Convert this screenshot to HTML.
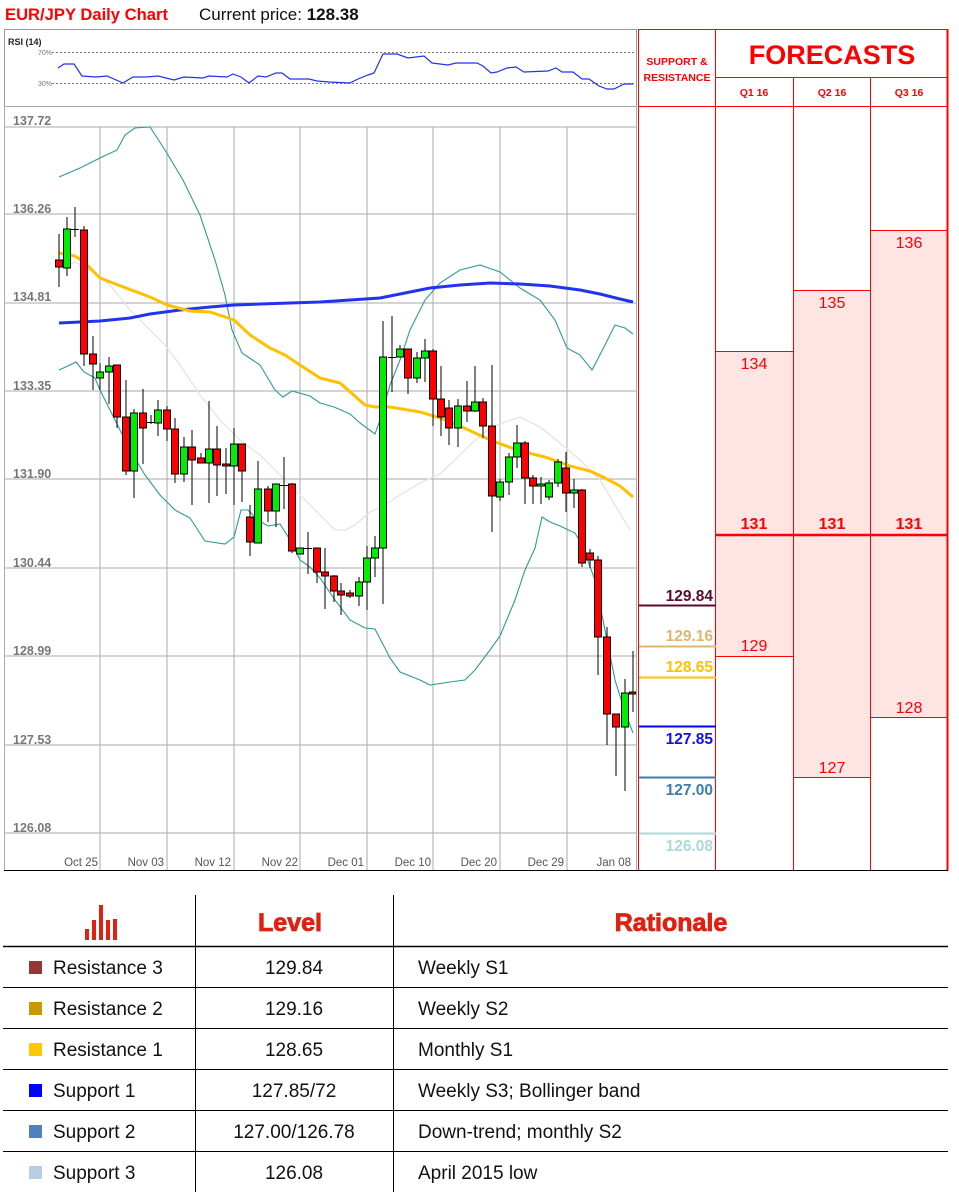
<!DOCTYPE html>
<html><head><meta charset="utf-8"><style>
html,body{margin:0;padding:0;background:#fff;}
svg{display:block;}
text{font-family:"Liberation Sans",sans-serif;}
</style></head><body>
<svg width="959" height="1192" viewBox="0 0 959 1192" xmlns="http://www.w3.org/2000/svg">
<rect width="959" height="1192" fill="#fff"/>
<!-- header -->
<text x="5" y="20" font-size="17" font-weight="bold" fill="#ff0000" textLength="163" lengthAdjust="spacingAndGlyphs">EUR/JPY Daily Chart</text>
<text x="199" y="20" font-size="17" fill="#111">Current price: <tspan font-weight="bold">128.38</tspan></text>

<!-- RSI box -->
<rect x="4.5" y="29.5" width="632" height="77" fill="#fff" stroke="#999"/>
<text x="8" y="45" font-size="9" font-weight="bold" fill="#222">RSI (14)</text>
<line x1="52" y1="52.5" x2="634" y2="52.5" stroke="#777" stroke-dasharray="2,2"/>
<line x1="52" y1="83.5" x2="634" y2="83.5" stroke="#777" stroke-dasharray="2,2"/>
<text x="38" y="55" font-size="7" fill="#777">70%</text>
<text x="38" y="86" font-size="7" fill="#777">30%</text>
<polyline fill="none" stroke="#2233ee" stroke-width="1.2" points="58,68 64,64 74,64 82,76 96,77 107,76 123,83 133,77 146,77 158,76 174,80 184,77 203,78 209,76 227,77 233,74 241,77 249,83 258,76 266,77 276,73 282,73 290,79 309,79 317,81 329,82 350,83 358,79 368,75 374,73 383,54 397,54 408,58 424,56 432,63 448,65 456,63 477,63 483,66 491,73 497,72 507,68 516,67 524,72 548,71 556,68 562,72 573,72 582,79 589,79 599,86 607,89 614,89 624,84 633,84"/>

<!-- main chart frame -->
<rect x="4.5" y="106.5" width="632" height="764" fill="#fff" stroke="#aaa"/>
<g stroke="#aaa" stroke-width="1">
<line x1="5" y1="127" x2="636" y2="127"/>
<line x1="5" y1="214" x2="636" y2="214"/>
<line x1="5" y1="303" x2="636" y2="303"/>
<line x1="5" y1="391" x2="636" y2="391"/>
<line x1="5" y1="479" x2="636" y2="479"/>
<line x1="5" y1="568" x2="636" y2="568"/>
<line x1="5" y1="656" x2="636" y2="656"/>
<line x1="5" y1="745" x2="636" y2="745"/>
<line x1="5" y1="833" x2="636" y2="833"/>
<line x1="100" y1="127" x2="100" y2="870"/>
<line x1="167" y1="127" x2="167" y2="870"/>
<line x1="234" y1="127" x2="234" y2="870"/>
<line x1="300" y1="127" x2="300" y2="870"/>
<line x1="367" y1="127" x2="367" y2="870"/>
<line x1="433" y1="127" x2="433" y2="870"/>
<line x1="500" y1="127" x2="500" y2="870"/>
<line x1="567" y1="127" x2="567" y2="870"/>
</g>
<line x1="4" y1="870.5" x2="640" y2="870.5" stroke="#000" stroke-width="1"/>
<g font-size="12.5" font-weight="bold" fill="#777">
<text x="13" y="125">137.72</text>
<text x="13" y="213">136.26</text>
<text x="13" y="301">134.81</text>
<text x="13" y="390">133.35</text>
<text x="13" y="478">131.90</text>
<text x="13" y="567">130.44</text>
<text x="13" y="655">128.99</text>
<text x="13" y="744">127.53</text>
<text x="13" y="832">126.08</text>
</g>
<g font-size="11.5" fill="#555" text-anchor="end">
<text x="98" y="866">Oct 25</text>
<text x="164" y="866">Nov 03</text>
<text x="231" y="866">Nov 12</text>
<text x="298" y="866">Nov 22</text>
<text x="364" y="866">Dec 01</text>
<text x="431" y="866">Dec 10</text>
<text x="497" y="866">Dec 20</text>
<text x="564" y="866">Dec 29</text>
<text x="631" y="866">Jan 08</text>
</g>

<!-- bands -->
<polyline fill="none" stroke="#e2e2e2" stroke-width="1.2" points="59,268 75,262 90,270 110,285 130,310 150,330 165,345 180,365 200,395 220,420 240,440 260,455 280,475 300,495 320,515 335,530 345,530 355,525 370,512 385,505 400,495 420,483 440,474 455,460 470,445 490,428 505,422 520,417 540,427 560,443 580,460 600,480 615,505 630,530"/>
<polyline fill="none" stroke="#2e9a94" stroke-width="1.1" points="59,177 80,168 100,158 117,150 125,135 135,128 150,127 165,150 183,180 200,215 215,260 225,295 232,330 242,353 260,365 275,390 283,397 292,391 310,396 320,403 334,407 350,414 360,423 375,434 380,420 390,385 400,360 410,330 425,300 440,283 460,270 480,265 500,272 520,288 540,300 555,320 567,348 580,355 592,370 605,345 615,325 625,328 633,334"/>
<polyline fill="none" stroke="#2e9a94" stroke-width="1.1" points="59,370 70,365 76,362 84,372 95,378 100,390 110,410 120,430 130,450 145,475 160,495 175,510 190,518 205,541 225,544 234,537 241,510 248,510 258,520 268,526 280,524 292,543 300,560 310,567 320,578 335,600 350,620 365,628 375,629 390,658 400,672 420,680 430,685 450,682 465,680 475,670 490,650 500,636 515,600 525,570 535,548 542,517 550,522 560,526 575,533 582,545 595,580 605,630 615,680 625,712 633,733"/>
<polyline fill="none" stroke="#2233ee" stroke-width="3" points="59,323 80,322 100,321 130,318 150,314 180,310 210,307 234,305 260,304 290,303 320,302 350,300 380,298 400,294 430,288 460,285 490,283 520,284 550,286 580,290 600,294 620,299 633,302"/>
<polyline fill="none" stroke="#ffc000" stroke-width="3" points="59,253 75,256 84,262 100,278 126,288 150,297 167,305 190,311 210,312 234,320 250,335 270,348 285,355 300,365 320,378 340,383 365,405 375,407 390,407 420,412 440,418 460,426 490,440 520,451 545,457 570,466 590,471 605,478 620,486 633,497"/>

<!-- candles -->
<g stroke="#000" stroke-width="1">
<line x1="59" y1="234" x2="59" y2="287"/><rect x="55.5" y="260" width="7" height="7" fill="#ff0000"/>
<line x1="67" y1="217" x2="67" y2="276"/><rect x="63.5" y="229" width="7" height="39" fill="#00ee00"/>
<line x1="75" y1="207" x2="75" y2="237"/><line x1="71" y1="229.5" x2="79" y2="229.5"/>
<line x1="84" y1="226" x2="84" y2="366"/><rect x="80.5" y="230" width="7" height="124" fill="#ff0000"/>
<line x1="93" y1="336" x2="93" y2="390"/><rect x="89.5" y="354" width="7" height="10" fill="#ff0000"/>
<line x1="100" y1="363" x2="100" y2="390"/><rect x="96.5" y="372" width="7" height="6" fill="#00ee00"/>
<line x1="109" y1="357" x2="109" y2="404"/><rect x="105.5" y="366" width="7" height="6" fill="#00ee00"/>
<line x1="117" y1="365" x2="117" y2="428"/><rect x="113.5" y="365" width="7" height="52" fill="#ff0000"/>
<line x1="126" y1="380" x2="126" y2="475"/><rect x="122.5" y="417" width="7" height="54" fill="#ff0000"/>
<line x1="134" y1="409" x2="134" y2="498"/><rect x="130.5" y="413" width="7" height="58" fill="#00ee00"/>
<line x1="143" y1="389" x2="143" y2="464"/><rect x="139.5" y="413" width="7" height="15" fill="#ff0000"/>
<line x1="151" y1="415" x2="151" y2="424"/><line x1="147" y1="422.5" x2="155" y2="422.5"/>
<line x1="158" y1="400" x2="158" y2="436"/><rect x="154.5" y="410" width="7" height="13" fill="#00ee00"/>
<line x1="167" y1="406" x2="167" y2="441"/><rect x="163.5" y="410" width="7" height="19" fill="#ff0000"/>
<line x1="175" y1="418" x2="175" y2="483"/><rect x="171.5" y="429" width="7" height="45" fill="#ff0000"/>
<line x1="184" y1="437" x2="184" y2="482"/><rect x="180.5" y="447" width="7" height="27" fill="#00ee00"/>
<line x1="192" y1="430" x2="192" y2="505"/><rect x="188.5" y="447" width="7" height="13" fill="#ff0000"/>
<line x1="201" y1="453" x2="201" y2="463"/><rect x="197.5" y="458" width="7" height="5" fill="#ff0000"/>
<line x1="209" y1="401" x2="209" y2="503"/><rect x="205.5" y="449" width="7" height="14" fill="#00ee00"/>
<line x1="217" y1="426" x2="217" y2="496"/><rect x="213.5" y="449" width="7" height="16" fill="#ff0000"/>
<line x1="226" y1="448" x2="226" y2="494"/><rect x="222.5" y="464" width="7" height="2" fill="#ff0000"/>
<line x1="234" y1="428" x2="234" y2="505"/><rect x="230.5" y="444" width="7" height="22" fill="#00ee00"/>
<line x1="242" y1="444" x2="242" y2="502"/><rect x="238.5" y="444" width="7" height="27" fill="#ff0000"/>
<line x1="250" y1="505" x2="250" y2="556"/><rect x="246.5" y="517" width="7" height="25" fill="#ff0000"/>
<line x1="258" y1="461" x2="258" y2="543"/><rect x="254.5" y="489" width="7" height="54" fill="#00ee00"/>
<line x1="268" y1="486" x2="268" y2="522"/><rect x="264.5" y="489" width="7" height="22" fill="#ff0000"/>
<line x1="276" y1="484" x2="276" y2="527"/><rect x="272.5" y="484" width="7" height="27" fill="#00ee00"/>
<line x1="284" y1="457" x2="284" y2="509"/><line x1="280" y1="485.5" x2="288" y2="485.5"/>
<line x1="292" y1="483" x2="292" y2="553"/><rect x="288.5" y="484" width="7" height="67" fill="#ff0000"/>
<line x1="300" y1="548" x2="300" y2="553"/><rect x="296.5" y="548" width="7" height="6" fill="#00ee00"/>
<line x1="308" y1="532" x2="308" y2="574"/><line x1="304" y1="548.5" x2="312" y2="548.5"/>
<line x1="317" y1="548" x2="317" y2="583"/><rect x="313.5" y="548" width="7" height="24" fill="#ff0000"/>
<line x1="325" y1="548" x2="325" y2="609"/><rect x="321.5" y="572" width="7" height="4" fill="#ff0000"/>
<line x1="334" y1="575" x2="334" y2="602"/><rect x="330.5" y="576" width="7" height="15" fill="#ff0000"/>
<line x1="341" y1="583" x2="341" y2="615"/><rect x="337.5" y="591" width="7" height="4" fill="#ff0000"/>
<line x1="350" y1="590" x2="350" y2="598"/><rect x="346.5" y="593" width="7" height="3" fill="#ff0000"/>
<line x1="359" y1="577" x2="359" y2="606"/><rect x="355.5" y="582" width="7" height="14" fill="#00ee00"/>
<line x1="367" y1="546" x2="367" y2="610"/><rect x="363.5" y="558" width="7" height="24" fill="#00ee00"/>
<line x1="375" y1="536" x2="375" y2="577"/><rect x="371.5" y="548" width="7" height="10" fill="#00ee00"/>
<line x1="383" y1="321" x2="383" y2="604"/><rect x="379.5" y="357" width="7" height="191" fill="#00ee00"/>
<line x1="392" y1="316" x2="392" y2="392"/><line x1="388" y1="357.5" x2="396" y2="357.5"/>
<line x1="400" y1="345" x2="400" y2="357"/><rect x="396.5" y="349" width="7" height="8" fill="#00ee00"/>
<line x1="408" y1="349" x2="408" y2="394"/><rect x="404.5" y="349" width="7" height="29" fill="#ff0000"/>
<line x1="417" y1="352" x2="417" y2="383"/><rect x="413.5" y="358" width="7" height="20" fill="#00ee00"/>
<line x1="425" y1="339" x2="425" y2="382"/><rect x="421.5" y="351" width="7" height="7" fill="#00ee00"/>
<line x1="433" y1="349" x2="433" y2="426"/><rect x="429.5" y="351" width="7" height="48" fill="#ff0000"/>
<line x1="441" y1="366" x2="441" y2="436"/><rect x="437.5" y="399" width="7" height="18" fill="#ff0000"/>
<line x1="449" y1="400" x2="449" y2="445"/><rect x="445.5" y="408" width="7" height="20" fill="#ff0000"/>
<line x1="458" y1="399" x2="458" y2="447"/><rect x="454.5" y="406" width="7" height="22" fill="#00ee00"/>
<line x1="467" y1="381" x2="467" y2="422"/><rect x="463.5" y="406" width="7" height="5" fill="#ff0000"/>
<line x1="475" y1="366" x2="475" y2="412"/><rect x="471.5" y="402" width="7" height="9" fill="#00ee00"/>
<line x1="483" y1="398" x2="483" y2="438"/><rect x="479.5" y="402" width="7" height="24" fill="#ff0000"/>
<line x1="492" y1="365" x2="492" y2="532"/><rect x="488.5" y="426" width="7" height="70" fill="#ff0000"/>
<line x1="500" y1="479" x2="500" y2="501"/><rect x="496.5" y="482" width="7" height="15" fill="#00ee00"/>
<line x1="509" y1="453" x2="509" y2="495"/><rect x="505.5" y="457" width="7" height="25" fill="#00ee00"/>
<line x1="517" y1="425" x2="517" y2="468"/><rect x="513.5" y="443" width="7" height="14" fill="#00ee00"/>
<line x1="525" y1="441" x2="525" y2="504"/><rect x="521.5" y="443" width="7" height="35" fill="#ff0000"/>
<line x1="533" y1="475" x2="533" y2="504"/><rect x="529.5" y="478" width="7" height="8" fill="#ff0000"/>
<line x1="541" y1="477" x2="541" y2="504"/><rect x="537.5" y="484" width="7" height="2" fill="#00ee00"/>
<line x1="549" y1="480" x2="549" y2="500"/><rect x="545.5" y="483" width="7" height="14" fill="#00ee00"/>
<line x1="558" y1="459" x2="558" y2="487"/><rect x="554.5" y="462" width="7" height="21" fill="#00ee00"/>
<line x1="566" y1="452" x2="566" y2="512"/><rect x="562.5" y="468" width="7" height="25" fill="#ff0000"/>
<line x1="574" y1="479" x2="574" y2="508"/><rect x="570.5" y="490" width="7" height="3" fill="#00ee00"/>
<line x1="582" y1="489" x2="582" y2="567"/><rect x="578.5" y="490" width="7" height="73" fill="#ff0000"/>
<line x1="590" y1="549" x2="590" y2="568"/><rect x="586.5" y="553" width="7" height="7" fill="#ff0000"/>
<line x1="598" y1="556" x2="598" y2="675"/><rect x="594.5" y="560" width="7" height="77" fill="#ff0000"/>
<line x1="607" y1="627" x2="607" y2="745"/><rect x="603.5" y="637" width="7" height="77" fill="#ff0000"/>
<line x1="616" y1="714" x2="616" y2="776"/><rect x="612.5" y="714" width="7" height="13" fill="#ff0000"/>
<line x1="625" y1="679" x2="625" y2="791"/><rect x="621.5" y="693" width="7" height="34" fill="#00ee00"/>
<line x1="633" y1="651" x2="633" y2="712"/><rect x="629.5" y="692" width="6" height="2" fill="#ff0000"/>
</g>

<!-- forecast table -->
<rect x="716" y="352" width="77" height="305" fill="#ffe4e4"/>
<rect x="793" y="291" width="77" height="486" fill="#ffe4e4"/>
<rect x="870" y="231" width="78" height="486" fill="#ffe4e4"/>
<g stroke="#ff0000" stroke-width="1" fill="none">
<rect x="638.5" y="29.5" width="309" height="841"/>
<line x1="715.5" y1="29" x2="715.5" y2="871"/>
<line x1="715" y1="77.5" x2="948" y2="77.5"/>
<line x1="638" y1="106.5" x2="948" y2="106.5"/>
<line x1="793.5" y1="77" x2="793.5" y2="871"/>
<line x1="870.5" y1="77" x2="870.5" y2="871"/>
<line x1="716" y1="351.5" x2="793" y2="351.5"/>
<line x1="716" y1="656.5" x2="793" y2="656.5"/>
<line x1="793" y1="290.5" x2="870" y2="290.5"/>
<line x1="793" y1="777.5" x2="870" y2="777.5"/>
<line x1="870" y1="230.5" x2="948" y2="230.5"/>
<line x1="870" y1="717.5" x2="948" y2="717.5"/>
</g>
<line x1="947.5" y1="29" x2="947.5" y2="871" stroke="#ff0000" stroke-width="2"/>
<line x1="716" y1="535" x2="948" y2="535" stroke="#ff0000" stroke-width="2.5"/>
<line x1="638" y1="870.5" x2="948" y2="870.5" stroke="#000"/>
<text x="832" y="64" font-size="27" font-weight="bold" fill="#ff0000" text-anchor="middle">FORECASTS</text>
<g font-size="10.5" font-weight="bold" fill="#ff0000" text-anchor="middle">
<text x="677" y="65">SUPPORT &amp;</text>
<text x="677" y="81">RESISTANCE</text>
<text x="754" y="96">Q1 16</text>
<text x="832" y="96">Q2 16</text>
<text x="909" y="96">Q3 16</text>
</g>
<g font-size="16" fill="#ff0000" text-anchor="middle">
<text x="754" y="369">134</text>
<text x="832" y="308">135</text>
<text x="909" y="248">136</text>
<text x="754" y="651">129</text>
<text x="832" y="773">127</text>
<text x="909" y="713">128</text>
<g font-weight="bold"><text x="754" y="529">131</text><text x="832" y="529">131</text><text x="909" y="529">131</text></g>
</g>
<!-- S&R lines -->
<line x1="639" y1="605.5" x2="716" y2="605.5" stroke="#5a0a2e" stroke-width="2"/>
<line x1="639" y1="646.5" x2="716" y2="646.5" stroke="#dbb86e" stroke-width="2"/>
<line x1="639" y1="677.5" x2="716" y2="677.5" stroke="#ffc000" stroke-width="2"/>
<line x1="639" y1="726.5" x2="716" y2="726.5" stroke="#0000ff" stroke-width="2"/>
<line x1="639" y1="777.5" x2="716" y2="777.5" stroke="#3a7fb0" stroke-width="2"/>
<line x1="639" y1="833.5" x2="716" y2="833.5" stroke="#aed8d8" stroke-width="2"/>
<g font-size="15.5" font-weight="bold" text-anchor="end">
<text x="713" y="601" fill="#5a0a2e">129.84</text>
<text x="713" y="641" fill="#dbb86e">129.16</text>
<text x="713" y="672" fill="#ffc000">128.65</text>
<text x="713" y="744" fill="#1010ee">127.85</text>
<text x="713" y="795" fill="#3a7fb0">127.00</text>
<text x="713" y="851" fill="#aed8d8">126.08</text>
</g>

<!-- bottom table -->
<g fill="#e02010">
<rect x="85" y="929" width="4" height="11"/>
<rect x="92" y="920" width="4" height="20"/>
<rect x="99" y="905" width="4" height="35"/>
<rect x="106" y="920" width="4" height="20"/>
<rect x="113" y="919" width="4" height="21"/>
</g>
<text x="290" y="931" font-size="25" font-weight="bold" fill="#e02010" text-anchor="middle" stroke="#e02010" stroke-width="0.8">Level</text>
<text x="671" y="931" font-size="25" font-weight="bold" fill="#e02010" text-anchor="middle" stroke="#e02010" stroke-width="0.8">Rationale</text>
<g stroke="#000" stroke-width="1">
<line x1="195.5" y1="895" x2="195.5" y2="1192"/>
<line x1="393.5" y1="895" x2="393.5" y2="1192"/>
<line x1="3" y1="946.5" x2="948" y2="946.5" stroke-width="1.5"/>
<line x1="3" y1="987.5" x2="948" y2="987.5"/>
<line x1="3" y1="1028.5" x2="948" y2="1028.5"/>
<line x1="3" y1="1069.5" x2="948" y2="1069.5"/>
<line x1="3" y1="1110.5" x2="948" y2="1110.5"/>
<line x1="3" y1="1151.5" x2="948" y2="1151.5"/>
</g>
<rect x="29" y="961" width="13" height="13" fill="#953735"/>
<rect x="29" y="1002" width="13" height="13" fill="#c99a00"/>
<rect x="29" y="1043" width="13" height="13" fill="#ffc800"/>
<rect x="29" y="1084" width="13" height="13" fill="#0000ff"/>
<rect x="29" y="1125" width="13" height="13" fill="#4f81bd"/>
<rect x="29" y="1166" width="13" height="13" fill="#b8cce4"/>
<g font-size="19" fill="#111">
<text x="53" y="974">Resistance 3</text>
<text x="53" y="1015">Resistance 2</text>
<text x="53" y="1056">Resistance 1</text>
<text x="53" y="1097">Support 1</text>
<text x="53" y="1138">Support 2</text>
<text x="53" y="1179">Support 3</text>
<g text-anchor="middle">
<text x="294" y="974">129.84</text>
<text x="294" y="1015">129.16</text>
<text x="294" y="1056">128.65</text>
<text x="294" y="1097">127.85/72</text>
<text x="294" y="1138">127.00/126.78</text>
<text x="294" y="1179">126.08</text>
</g>
<text x="418" y="974">Weekly S1</text>
<text x="418" y="1015">Weekly S2</text>
<text x="418" y="1056">Monthly S1</text>
<text x="418" y="1097">Weekly S3; Bollinger band</text>
<text x="418" y="1138">Down-trend; monthly S2</text>
<text x="418" y="1179">April 2015 low</text>
</g>
</svg>
</body></html>
